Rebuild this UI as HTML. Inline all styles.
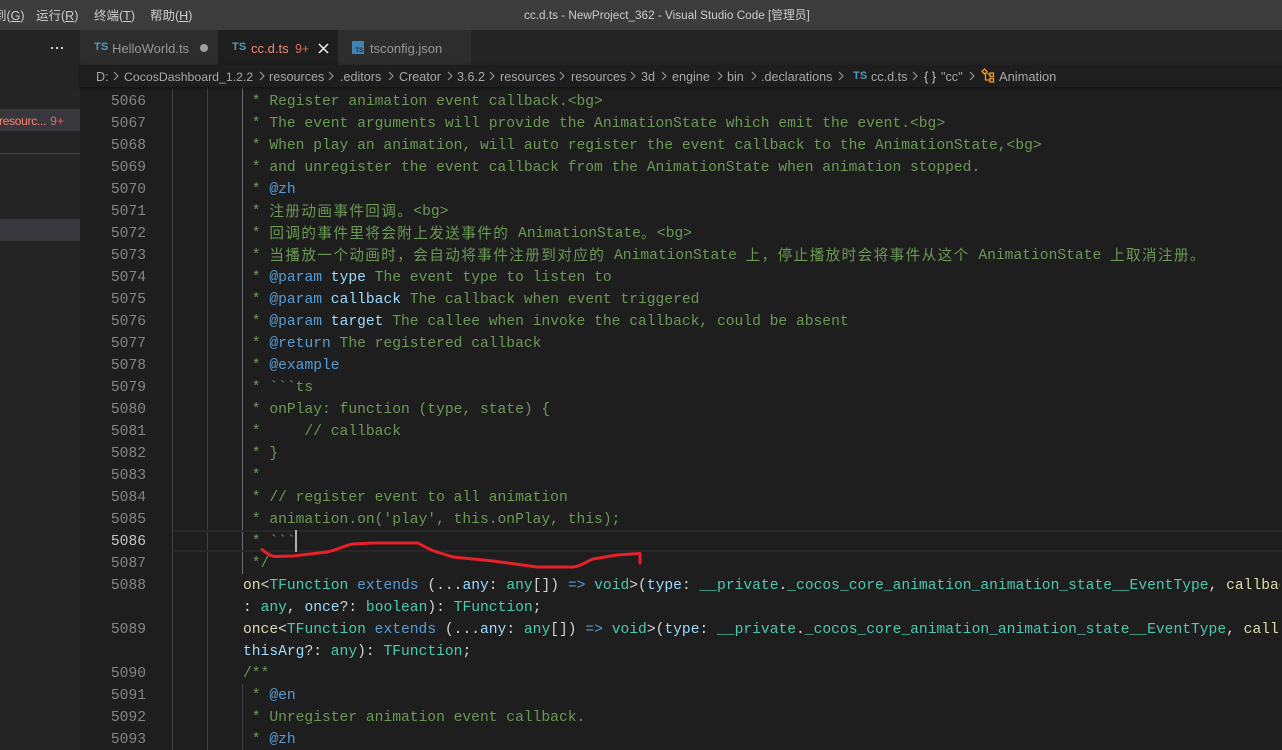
<!DOCTYPE html>
<html><head><meta charset="utf-8"><style>
html,body{margin:0;padding:0;background:#1e1e1e}
#r{position:relative;width:1282px;height:750px;overflow:hidden;background:#1e1e1e;font-family:"Liberation Sans","Noto Sans CJK SC",sans-serif}
#r div,#r svg{position:absolute}
.a{position:absolute;white-space:nowrap}
.l{position:absolute;left:243px;height:22px;line-height:22px;white-space:pre;font-family:"Liberation Mono","Noto Sans CJK SC",monospace;font-size:14.63px;color:#6a9955;width:1037px;overflow:hidden}
.n{position:absolute;left:96px;width:50px;text-align:right;height:22px;line-height:22px;font-family:"Liberation Mono",monospace;font-size:14.63px;color:#858585}
.z{font-family:"Noto Sans CJK SC",sans-serif;font-size:14.6px;letter-spacing:1.4px;line-height:0;position:relative;top:1px}
.k{color:#569cd6}.p{color:#9cdcfe}.t{color:#4ec9b0}.f{color:#dcdcaa}.w{color:#d4d4d4}
.b{top:1px;height:22px;line-height:22px;font-size:12.6px;color:#a8a8a8}
.m{top:6px;height:20px;line-height:20px;font-size:12.5px;color:#cccccc}
.ts{font-size:11px;font-weight:bold;color:#519aba;letter-spacing:.2px}
u{text-decoration:underline}
</style></head><body><div id="r">
<div style="left:0;top:0;width:1282px;height:30px;background:#3c3c3c"></div>
<span class="a m" style="left:-6px">到(<u>G</u>)</span>
<span class="a m" style="left:36px">运行(<u>R</u>)</span>
<span class="a m" style="left:94px">终端(<u>T</u>)</span>
<span class="a m" style="left:150px">帮助(<u>H</u>)</span>
<span class="a m" style="left:524px;font-size:11.75px">cc.d.ts - NewProject_362 - Visual Studio Code [管理员]</span>

<div style="left:0;top:30px;width:80px;height:720px;background:#252526"></div>
<div style="left:51px;top:47px;width:2px;height:2px;background:#ccc"></div>
<div style="left:56px;top:47px;width:2px;height:2px;background:#ccc"></div>
<div style="left:61px;top:47px;width:2px;height:2px;background:#ccc"></div>
<div style="left:0;top:109px;width:80px;height:22px;background:#37373d"></div>
<span class="a" style="left:-1px;top:110px;line-height:22px;font-size:12px;letter-spacing:-.3px;color:#f48771">resourc...</span>
<span class="a" style="left:50px;top:110px;line-height:22px;font-size:12.4px;color:#d9695a">9+</span>
<div style="left:0;top:153px;width:80px;height:1px;background:#444"></div>
<div style="left:0;top:219px;width:80px;height:22px;background:#37373d"></div>

<div style="left:80px;top:30px;width:1202px;height:35px;background:#252526"></div>
<div style="left:80px;top:30px;width:138px;height:35px;background:#2d2d2d"></div>
<div style="left:218px;top:30px;width:120px;height:35px;background:#1e1e1e"></div>
<div style="left:338px;top:30px;width:133px;height:35px;background:#2d2d2d"></div>
<span class="a ts" style="left:94px;top:39px;line-height:16px">TS</span>
<span class="a" style="left:112px;top:39px;line-height:20px;font-size:13px;color:#969696">HelloWorld.ts</span>
<div style="left:200px;top:44px;width:8px;height:8px;border-radius:50%;background:#a0a0a0"></div>
<span class="a ts" style="left:232px;top:39px;line-height:16px">TS</span>
<span class="a" style="left:251px;top:39px;line-height:20px;font-size:13px;color:#f48771">cc.d.ts</span>
<span class="a" style="left:295px;top:39px;line-height:20px;font-size:12.5px;color:#d9695a">9+</span>
<svg style="left:318px;top:43px" width="11" height="11" viewBox="0 0 11 11"><path d="M1 1L10 10M10 1L1 10" stroke="#f0f0f0" stroke-width="1.5" fill="none"/></svg>
<svg style="left:352px;top:41px" width="12" height="13" viewBox="0 0 12 13"><rect width="12" height="13" fill="#3f82b5"/><text x="3.5" y="11" font-family="Liberation Sans" font-size="6" font-weight="bold" fill="#1e2a35">TS</text></svg>
<span class="a" style="left:370px;top:39px;line-height:20px;font-size:13px;color:#969696">tsconfig.json</span>

<div style="left:80px;top:65px;width:1202px;height:22px;background:#1e1e1e;box-shadow:0 1px 3px #111;z-index:3">
<span class="a b" style="left:16px">D:</span>
<span class="a b" style="left:44px;font-size:12.3px">CocosDashboard_1.2.2</span>
<span class="a b" style="left:189px">resources</span>
<span class="a b" style="left:260px">.editors</span>
<span class="a b" style="left:319px">Creator</span>
<span class="a b" style="left:377px">3.6.2</span>
<span class="a b" style="left:420px">resources</span>
<span class="a b" style="left:491px">resources</span>
<span class="a b" style="left:561px">3d</span>
<span class="a b" style="left:592px">engine</span>
<span class="a b" style="left:647px">bin</span>
<span class="a b" style="left:681px">.declarations</span>
<span class="a ts" style="left:773px;top:3px;line-height:16px">TS</span>
<span class="a b" style="left:791px">cc.d.ts</span>
<span class="a b" style="left:844px;color:#c5c5c5">{ }</span>
<span class="a b" style="left:861px">"cc"</span>
<span class="a b" style="left:919px;font-size:12.9px">Animation</span>
<svg style="left:0;top:0" width="1000" height="22" viewBox="0 0 1000 22" fill="none" stroke="#a0a0a0" stroke-width="1"><path d="M34 7l4 4-4 4M180 7l4 4-4 4M249 7l4 4-4 4M309 7l4 4-4 4M368 7l4 4-4 4M410 7l4 4-4 4M480 7l4 4-4 4M551 7l4 4-4 4M582 7l4 4-4 4M638 7l4 4-4 4M672 7l4 4-4 4M759 7l4 4-4 4M833 7l4 4-4 4M890 7l4 4-4 4"/>
<g stroke="#ee9d28" stroke-width="1.3"><path d="M902 6.500l2.500-2.500 2.500 2.500-2.500 2.500zM907 8l3 2M905.500 9v6h4"/><rect x="910" y="8" width="3.500" height="3.500"/><rect x="910" y="13.500" width="3.500" height="3.500"/></g></svg>
</div>

<div style="left:172px;top:87px;width:1px;height:663px;background:#404040"></div>
<div style="left:207px;top:87px;width:1px;height:663px;background:#404040"></div>
<div style="left:242px;top:87px;width:1px;height:487px;background:#707070"></div>
<div style="left:242px;top:684px;width:1px;height:66px;background:#404040"></div>
<div style="left:173px;top:530px;width:1109px;height:18px;border-top:2px solid #282828;border-bottom:2px solid #282828"></div>

<span class="n" style="top:91px">5066</span><span class="n" style="top:113px">5067</span><span class="n" style="top:135px">5068</span><span class="n" style="top:157px">5069</span><span class="n" style="top:179px">5070</span><span class="n" style="top:201px">5071</span><span class="n" style="top:223px">5072</span><span class="n" style="top:245px">5073</span><span class="n" style="top:267px">5074</span><span class="n" style="top:289px">5075</span><span class="n" style="top:311px">5076</span><span class="n" style="top:333px">5077</span><span class="n" style="top:355px">5078</span><span class="n" style="top:377px">5079</span><span class="n" style="top:399px">5080</span><span class="n" style="top:421px">5081</span><span class="n" style="top:443px">5082</span><span class="n" style="top:465px">5083</span><span class="n" style="top:487px">5084</span><span class="n" style="top:509px">5085</span><span class="n" style="top:531px;color:#c6c6c6">5086</span><span class="n" style="top:553px">5087</span><span class="n" style="top:575px">5088</span><span class="n" style="top:619px">5089</span><span class="n" style="top:663px">5090</span><span class="n" style="top:685px">5091</span><span class="n" style="top:707px">5092</span><span class="n" style="top:729px">5093</span>

<span class="l" style="top:91px"> * Register animation event callback.&lt;bg&gt;</span>
<span class="l" style="top:113px"> * The event arguments will provide the AnimationState which emit the event.&lt;bg&gt;</span>
<span class="l" style="top:135px"> * When play an animation, will auto register the event callback to the AnimationState,&lt;bg&gt;</span>
<span class="l" style="top:157px"> * and unregister the event callback from the AnimationState when animation stopped.</span>
<span class="l" style="top:179px"> * <span class="k">@zh</span></span>
<span class="l" style="top:201px"> * <span class="z">注册动画事件回调。</span>&lt;bg&gt;</span>
<span class="l" style="top:223px"> * <span class="z">回调的事件里将会附上发送事件的</span> AnimationState<span class="z">。</span>&lt;bg&gt;</span>
<span class="l" style="top:245px"> * <span class="z">当播放一个动画时，会自动将事件注册到对应的</span> AnimationState <span class="z">上，停止播放时会将事件从这个</span> AnimationState <span class="z">上取消注册。</span></span>
<span class="l" style="top:267px"> * <span class="k">@param</span> <span class="p">type</span> The event type to listen to</span>
<span class="l" style="top:289px"> * <span class="k">@param</span> <span class="p">callback</span> The callback when event triggered</span>
<span class="l" style="top:311px"> * <span class="k">@param</span> <span class="p">target</span> The callee when invoke the callback, could be absent</span>
<span class="l" style="top:333px"> * <span class="k">@return</span> The registered callback</span>
<span class="l" style="top:355px"> * <span class="k">@example</span></span>
<span class="l" style="top:377px"> * &#96;&#96;&#96;ts</span>
<span class="l" style="top:399px"> * onPlay: function (type, state) {</span>
<span class="l" style="top:421px"> *     // callback</span>
<span class="l" style="top:443px"> * }</span>
<span class="l" style="top:465px"> *</span>
<span class="l" style="top:487px"> * // register event to all animation</span>
<span class="l" style="top:509px"> * animation.on('play', this.onPlay, this);</span>
<span class="l" style="top:531px"> * &#96;&#96;&#96;</span>
<span class="l" style="top:553px"> */</span>
<span class="l w" style="top:575px"><span class="f">on</span>&lt;<span class="t">TFunction</span> <span class="k">extends</span> (...<span class="p">any</span>: <span class="t">any</span>[]) <span class="k">=&gt;</span> <span class="t">void</span>&gt;(<span class="p">type</span>: <span class="t">__private</span>.<span class="t">_cocos_core_animation_animation_state__EventType</span>, <span class="f">callback</span></span>
<span class="l w" style="top:597px">: <span class="t">any</span>, <span class="p">once</span>?: <span class="t">boolean</span>): <span class="t">TFunction</span>;</span>
<span class="l w" style="top:619px"><span class="f">once</span>&lt;<span class="t">TFunction</span> <span class="k">extends</span> (...<span class="p">any</span>: <span class="t">any</span>[]) <span class="k">=&gt;</span> <span class="t">void</span>&gt;(<span class="p">type</span>: <span class="t">__private</span>.<span class="t">_cocos_core_animation_animation_state__EventType</span>, <span class="f">callback</span></span>
<span class="l w" style="top:641px"><span class="p">thisArg</span>?: <span class="t">any</span>): <span class="t">TFunction</span>;</span>
<span class="l" style="top:663px">/**</span>
<span class="l" style="top:685px"> * <span class="k">@en</span></span>
<span class="l" style="top:707px"> * Unregister animation event callback.</span>
<span class="l" style="top:729px"> * <span class="k">@zh</span></span>

<div style="left:295px;top:530px;width:2px;height:22px;background:#aeafad"></div>
<svg style="left:0;top:0" width="1282" height="750" viewBox="0 0 1282 750"><path d="M262 549.500C266 553 270 556 275 556.500L293 556L327 552C338 550 345 545 353 544L373 543L418 543C425 547 430 550 437 552L453 557L493 561L537 567L573 567C582 566 587 561 593 559L617 555L640 553.500L640 563" fill="none" stroke="#e8202a" stroke-width="3" stroke-linejoin="round" stroke-linecap="round"/></svg>
</div></body></html>
